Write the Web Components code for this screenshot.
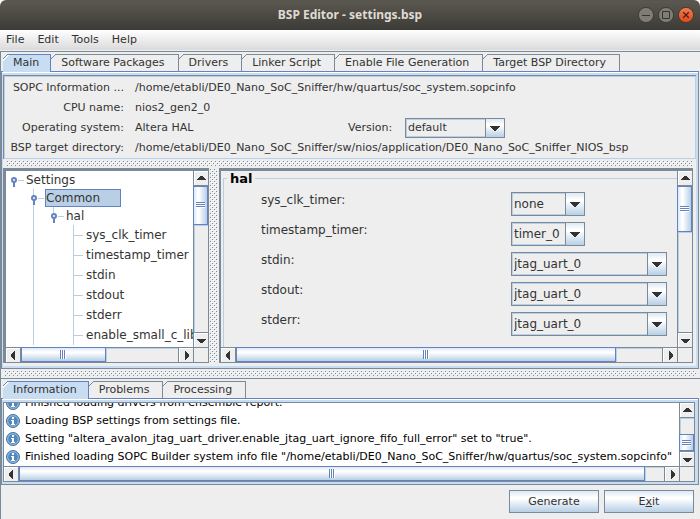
<!DOCTYPE html>
<html lang="en">
<head>
<meta charset="utf-8">
<title>BSP Editor - settings.bsp</title>
<style>
  html, body { margin: 0; height: 100%; }
  body {
    --line: #7a8a99; --blue: #6382bf; --pale: #b8cfe5; --sel: #c8ddf2; --face: #eeeeee;
    --metal: linear-gradient(#dde8f3, #ffffff 30%, #ffffff 36%, #b8cfe5);
    font: 11px/20px "DejaVu Sans", Verdana, sans-serif;
    color: #333333; background: #fff; overflow: hidden;
  }
</style>
</head>
<body>
<bsp-editor></bsp-editor>
<script>
const define = (name, render, setup) => customElements.define(name, class extends HTMLElement {
  connectedCallback() {
    if (this.shadowRoot) return;
    const t = document.createElement('template');
    t.innerHTML = '<style>*{box-sizing:border-box}:host([hidden]){display:none}</style>' + render(k => this.getAttribute(k) ?? '', this);
    this.attachShadow({ mode: 'open' }).append(t.content.cloneNode(true));
    if (setup) setup(this.shadowRoot, this);
  }
});

define('title-bar', a => `
  <style>
    :host { display: grid; grid-template-columns: 64px 1fr 64px; align-items: center; height: 30px; flex: none;
      background: linear-gradient(#57554d, #5a574f 2px, #3d3b36); border-radius: 6px 6px 0 0; }
    h1 { grid-column: 2; margin: 0; text-align: center; color: #dfdbd2; font: bold 12px/20px "Noto Sans", "Open Sans", sans-serif; }
    div { display: flex; gap: 4px; padding-right: 6px; justify-content: flex-end; }
    button { width: 16px; height: 16px; padding: 0; border: 0; background: none; display: block; }
    svg { display: block; }
  </style>
  <h1>${a('heading')}</h1>
  <div>
    <button aria-label="Minimize"><svg width="16" height="16"><circle cx="8" cy="8" r="7.6" fill="#7e7c74" stroke="#34332e" stroke-width=".8"/><path d="M4 8.5h8" stroke="#34332e"/></svg></button>
    <button aria-label="Maximize"><svg width="16" height="16"><circle cx="8" cy="8" r="7.6" fill="#7e7c74" stroke="#34332e" stroke-width=".8"/><path d="M4.5 4.5h7v7h-7z" fill="none" stroke="#34332e"/></svg></button>
    <button aria-label="Close"><svg width="16" height="16"><defs><linearGradient id="g" x2="0" y2="1"><stop stop-color="#f37a55"/><stop offset="1" stop-color="#df4a16"/></linearGradient></defs><circle cx="8" cy="8" r="7.6" fill="url(#g)" stroke="#34332e" stroke-width=".8"/><path d="M5.2 5.2l5.6 5.6M10.8 5.2l-5.6 5.6" stroke="#4a2415" stroke-width="1.3"/></svg></button>
  </div>`);

define('menu-strip', a => `
  <style>
    :host { display: flex; flex: none; height: 21px; padding-left: 6px; gap: 13px; background: linear-gradient(#fff, #dadada 20px, #eee 20px); }
    button { border: 0; padding: 0; background: none; font: inherit; color: inherit; line-height: 19px; height: 19px; }
  </style>
  ${a('items').split('|').map(t => `<button>${t}</button>`).join('')}`);

define('tab-pane', a => `
  <style>
    :host { display: flex; flex-direction: column; border-top: 1px solid var(--line); padding: 2px 1px 0 1px; }
    .tabs { display: flex; padding-left: 2px; height: 17px; }
    button { position: relative; border: 0; border-right: 1px solid var(--line); padding: 0 13px 0 10px; font: inherit; line-height: 16px; height: 17px; color: inherit; white-space: nowrap;
      background: linear-gradient(var(--line), var(--line)) 5px 0 / 100% 1px no-repeat, linear-gradient(135deg, var(--face) 3px, var(--line) 3px 4px, var(--face) 4px); }
    button[aria-selected=true] { height: 18px; z-index: 1; padding-right: 11px; border-color: var(--blue);
      background: linear-gradient(var(--blue), var(--blue)) 5px 0 / 100% 1px no-repeat, linear-gradient(135deg, var(--face) 3px, var(--blue) 3px 4px, #fff 4px 5px, var(--sel) 5px); }
    .body { flex: 1; min-height: 0; display: flex; flex-direction: column; border: 1px solid var(--line); border-top-color: var(--blue); background: var(--sel); padding: 3px 2px 2px 1px; box-shadow: inset 0 1px #fff; }
  </style>
  <div class="tabs" role="tablist">${a('tabs').split('|').map((t, i) => `<button role="tab" aria-selected="${!i}">${t}</button>`).join('')}</div>
  <div class="body"><slot></slot></div>`);

define('split-bar', a => `
  <style>
    :host { display: block; background: var(--face); flex: none; padding: 1px; }
    :host([vertical]) { width: 10px; }
    :host(:not([vertical])) { height: 9px; padding: 2px 4px; }
    svg { display: block; width: 100%; height: 100%; }
  </style>
  <svg><defs><pattern id="d" width="4" height="4" patternUnits="userSpaceOnUse"><path d="M0 0h1v1h-1zM2 2h1v1h-1z" fill="#7a8a99"/><path d="M1 1h1v1h-1zM3 3h1v1h-1z" fill="#fff"/></pattern></defs><rect width="100%" height="100%" fill="url(#d)"/></svg>`);

define('scroll-strip', a => {
  const v = a('dir') === 'v';
  const [b, t, e] = a('track').split(' ');
  const tri = v ? ['M3 9h9v-1h-1v-1h-1v-1h-1v-1h-3v1h-1v1h-1v1h-1z', 'M3 6h9v1h-1v1h-1v1h-1v1h-3v-1h-1v-1h-1v-1h-1z']
               : ['M9 3v9h-1v-1h-1v-1h-1v-1h-1v-3h1v-1h1v-1h1v-1z', 'M6 3v9h1v-1h1v-1h1v-1h1v-3h-1v-1h-1v-1h-1v-1z'];
  return `
  <style>
    :host { display: flex; flex-direction: ${v ? 'column' : 'row'}; flex: none; background: var(--face); ${v ? 'width:15px;border-left' : 'height:15px;border-top'}: 1px solid var(--line); }
    button { flex: none; display: block; width: ${v ? '14px' : '15px'}; height: ${v ? '15px' : '14px'}; padding: 0; border: 0; background: var(--face); box-shadow: inset 1px 1px #fff; border-${v ? 'bottom' : 'right'}: 1px solid var(--line); overflow: hidden; }
    button:last-child { border: 0 solid var(--line); border-${v ? 'top' : 'left'}-width: 1px; }
    svg { display: block; width: 14px; height: 14px; }
    .thumb { flex: ${t} 1 0; border: 1px solid var(--blue); margin-${v ? 'left' : 'top'}: -1px; background: linear-gradient(${v ? '90deg' : '180deg'}, #dde8f3, #fff 30%, #fff 36%, #b8cfe5);
      display: flex; align-items: center; justify-content: center; min-width: 0; min-height: 0; }
    .grip { ${v ? 'width:9px;height:6px' : 'width:6px;height:9px'}; background: repeating-linear-gradient(${v ? '180deg' : '90deg'}, var(--blue) 0 1px, #fff 1px 2px); }
    .b { flex: ${b} 1 0; } .e { flex: ${e} 1 0; }
    .b, .e { box-shadow: inset 1px 1px var(--pale); }
  </style>
  <button aria-label="${v ? 'Up' : 'Left'}"><svg viewBox="0 0 14 14"><path d="${tri[0]}" fill="#333"/></svg></button>
  <div class="b"></div><div class="thumb"><div class="grip"></div></div><div class="e"></div>
  <button aria-label="${v ? 'Down' : 'Right'}"><svg viewBox="0 0 14 14"><path d="${tri[1]}" fill="#333"/></svg></button>`;
});

define('scroll-area', a => `
  <style>
    :host { display: grid; grid-template: minmax(0, 1fr) 15px / minmax(0, 1fr) 15px; min-width: 0; border: 1px solid var(--line); background: var(--face); }
    .view { overflow: hidden; background: var(--view, #fff); display: flex; flex-direction: column; justify-content: var(--from, flex-start); min-height: 0; }
    .corner { border: 1px solid var(--line); border-width: 1px 0 0 1px; }
  </style>
  <div class="view"><slot></slot></div>
  <scroll-strip dir="v" track="${a('v')}"></scroll-strip>
  <scroll-strip dir="h" track="${a('h')}"></scroll-strip>
  <div class="corner"></div>`);

let uid = 0;
define('combo-field', a => { const id = 'c' + (++uid); return `
  <style>
    :host { display: grid; grid-template-columns: var(--label, 250px) var(--w, 156px); flex: none; }
    label { line-height: var(--lh, 17px); }
    span { display: grid; grid-template-rows: 100%; height: var(--h, 24px); }
    select, i { grid-area: 1 / 1; }
    select { appearance: none; min-width: 0; width: 100%; height: 100%; margin: 0; padding: 0 20px 1px 2px; border: 1px solid var(--line); border-radius: 0; outline: 1px solid var(--pale); outline-offset: -2px;
      background: var(--face); font: inherit; line-height: 16px; color: inherit; }
    i { justify-self: end; width: 20px; border: 1px solid var(--line); background: var(--metal); pointer-events: none; display: grid; place-items: center; z-index: 1; }
  </style>
  <label for="${id}">${a('label')}</label>
  <span><select id="${id}"><option>${a('value')}</option></select>
  <i><svg width="10" height="5"><path d="M0 0h10v1h-1v1h-1v1h-1v1h-1v1h-2v-1h-1v-1h-1v-1h-1v-1h-1z" fill="#333"/></svg></i></span>`; });

define('tree-node', a => `
  <style>
    :host { display: block; flex: none; }
    .row { display: flex; align-items: center; height: ${a('leaf') ? 20 : 18}px; white-space: nowrap; }
    .row svg { flex: none; }
    b { font-weight: normal; line-height: 16px; border: 1px solid transparent; padding-right: 20px; margin-left: -1px; }
    :host([selected]) b { background: var(--pale); border-color: var(--blue); }
    .kids { padding-left: 20px; background: linear-gradient(var(--pale), var(--pale)) 27px 0 / 1px ${a('rail') || '100%'} no-repeat; }
  </style>
  <div class="row">${a('leaf')
    ? '<svg width="20" height="18"><path d="M8 9.5h9" stroke="#b8cfe5"/></svg>'
    : '<svg width="20" height="18"><path d="M12 9.5h6" stroke="#b8cfe5"/><circle cx="8" cy="9" r="2" fill="#fff" stroke="#6382bf" stroke-width="2"/><path d="M8 11v5" stroke="#6382bf" stroke-width="2"/></svg>'}<b>${a('text')}</b></div>
  <div class="kids"><slot></slot></div>`);

define('log-line', a => `
  <style>
    :host { display: flex; flex: none; height: 18px; align-items: center; gap: 5px; padding-left: 2px; color: #000; white-space: nowrap; line-height: 18px; }
    svg { flex: none; }
  </style>
  <svg width="14" height="14"><circle cx="7" cy="7" r="6.5" fill="#6f9fd0" stroke="#47709d"/><circle cx="7" cy="7" r="5.3" fill="#5288bd" stroke="#a5c4e2" stroke-width=".8"/><path d="M6 3h2v2h-2zM5 6h3v4h1v1h-4v-1h1v-3h-1z" fill="#fff"/></svg><span><slot></slot></span>`);

define('push-button', a => `
  <style>
    :host { display: block; }
    button { width: 90px; height: 23px; padding: 0; border: 1px solid var(--line); background: var(--metal); font: inherit; line-height: 20px; color: inherit; }
  </style>
  <button><slot></slot></button>`);

define('target-info', a => `
  <style>
    :host { display: grid; grid-template-columns: 118px minmax(0, 1fr); column-gap: 11px; grid-auto-rows: 20px; flex: none; white-space: nowrap;
      border: 1px solid var(--line); border-width: 1px 0 0 1px; box-shadow: inset 1px 1px var(--pale), inset -1px -1px var(--pale); background: var(--face); padding: 2px 1px 1px 2px; }
    dt { text-align: right; } dd, dt { margin: 0; }
    dd { display: flex; align-items: flex-start; }
    .os span { width: 213px; }
    combo-field { --label: 57px; --w: 100px; --h: 20px; --lh: 20px; }
  </style>
  <dt>SOPC Information ...</dt><dd>/home/etabli/DE0_Nano_SoC_Sniffer/hw/quartus/soc_system.sopcinfo</dd>
  <dt>CPU name:</dt><dd>nios2_gen2_0</dd>
  <dt>Operating system:</dt><dd class="os"><span>Altera HAL</span><combo-field label="Version:" value="default"></combo-field></dd>
  <dt>BSP target directory:</dt><dd>/home/etabli/DE0_Nano_SoC_Sniffer/sw/nios/application/DE0_Nano_SoC_Sniffer_NIOS_bsp</dd>`);

define('bsp-editor', () => `
  <style>
    :host { display: flex; flex-direction: column; height: 100vh; }
    main { flex: 1; display: flex; flex-direction: column; min-height: 0; background: var(--face); border-left: 1px solid var(--line); }
    .upper { flex: 1; min-height: 0; padding-left: 0; }
    .lower { flex: none; padding-left: 0; }
    .split { flex: 1; min-height: 0; display: flex; background: var(--face); padding-bottom: 3px; }
    .tree { flex: 0 0 206px; font-size: 12px; }
    .form { flex: 1; --view: var(--face); font-size: 12px; margin-right: 3px; }
    .tree, .form { border-top-width: 3px; }
    .tree { border-left-width: 3px; } .form { border-left-width: 2px; }
    fieldset { margin: 0 0 0 2px; padding: 0; border: 1px solid var(--pale); border-width: 1px 0 0 1px; flex: 1 0 auto; min-width: 0; }
    legend { margin-left: 3px; padding: 0 3px; font: bold 13px/15px "DejaVu Sans", sans-serif; color: #000; }
    .fields { display: flex; flex-direction: column; gap: 6px; padding: 6px 0 0 37px; }
    .small { --w: 74px; }
    .log { height: 80px; --from: flex-end; margin-right: 1px; }
    footer { display: flex; justify-content: flex-end; gap: 5px; padding: 5px 6px 6px; flex: none; }
  </style>
  <title-bar heading="BSP Editor - settings.bsp"></title-bar>
  <menu-strip items="File|Edit|Tools|Help"></menu-strip>
  <main>
    <tab-pane class="upper" tabs="Main|Software Packages|Drivers|Linker Script|Enable File Generation|Target BSP Directory">
      <target-info></target-info>
      <split-bar></split-bar>
      <div class="split">
        <scroll-area class="tree" v="0 37 109" h="0 84 73">
          <tree-node text="Settings">
            <tree-node text="Common" selected rail="6px">
              <tree-node text="hal">
                ${['sys_clk_timer', 'timestamp_timer', 'stdin', 'stdout', 'stderr', 'enable_small_c_library'].map(t => `<tree-node leaf="1" text="${t}"></tree-node>`).join('')}
              </tree-node>
            </tree-node>
          </tree-node>
        </scroll-area>
        <split-bar vertical></split-bar>
        <scroll-area class="form" v="0 45 101" h="0 379 46">
          <fieldset><legend>hal</legend><div class="fields">
            <combo-field class="small" label="sys_clk_timer:" value="none"></combo-field>
            <combo-field class="small" label="timestamp_timer:" value="timer_0"></combo-field>
            <combo-field label="stdin:" value="jtag_uart_0"></combo-field>
            <combo-field label="stdout:" value="jtag_uart_0"></combo-field>
            <combo-field label="stderr:" value="jtag_uart_0"></combo-field>
          </div></fieldset>
        </scroll-area>
      </div>
    </tab-pane>
    <split-bar></split-bar>
    <tab-pane class="lower" tabs="Information|Problems|Processing">
      <scroll-area class="log" v="16 15 0" h="0 626 19">
        <log-line>Finished loading drivers from ensemble report.</log-line>
        <log-line>Loading BSP settings from settings file.</log-line>
        <log-line>Setting "altera_avalon_jtag_uart_driver.enable_jtag_uart_ignore_fifo_full_error" set to "true".</log-line>
        <log-line>Finished loading SOPC Builder system info file "/home/etabli/DE0_Nano_SoC_Sniffer/hw/quartus/soc_system.sopcinfo"</log-line>
      </scroll-area>
    </tab-pane>
    <footer><push-button>Generate</push-button><push-button>E<u>x</u>it</push-button></footer>
  </main>`);
</script>
</body>
</html>
